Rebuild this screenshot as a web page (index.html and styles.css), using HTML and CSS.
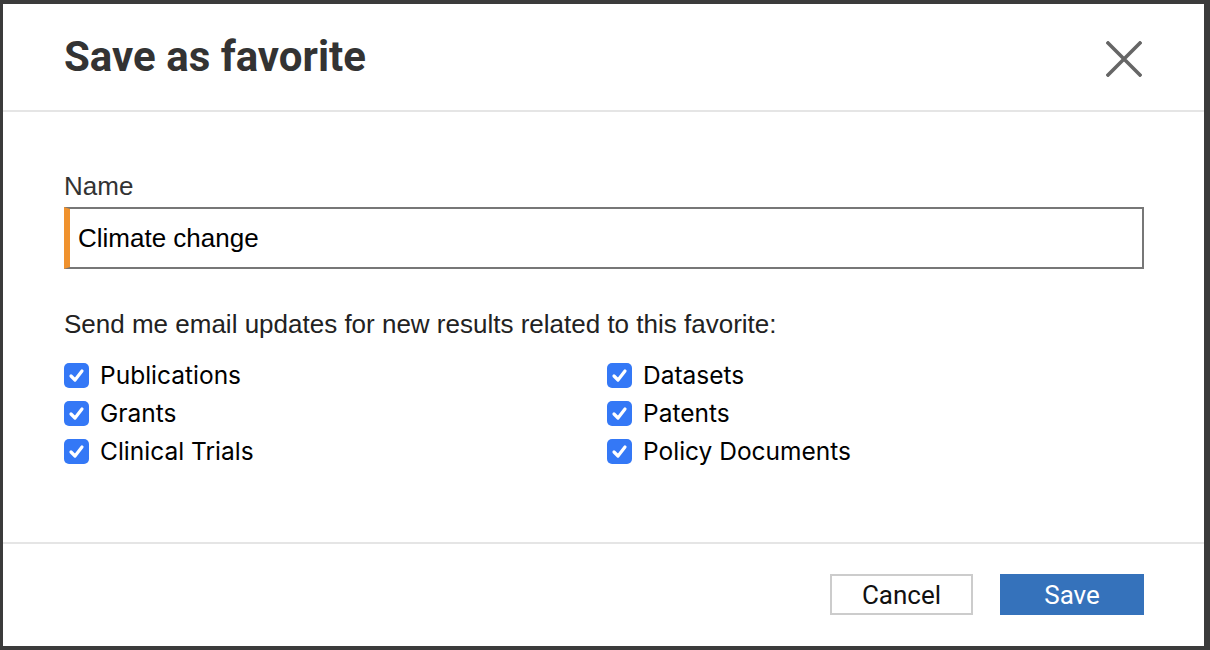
FILE: index.html
```html
<!DOCTYPE html>
<html>
<head>
<meta charset="utf-8">
<link rel="stylesheet" href="styles.css">
</head>
<body>
<div class="modal">
  <div class="header">
    <h1 class="title">Save as favorite</h1>
    <button class="close" aria-label="Close">
      <svg width="36" height="36" viewBox="0 0 36 36"><path d="M2 2 L34 34 M34 2 L2 34" stroke="#666" stroke-width="3.6" stroke-linecap="square" fill="none"/></svg>
    </button>
  </div>
  <div class="content">
    <div class="label">Name</div>
    <div class="input">Climate change</div>
    <div class="prompt">Send me email updates for new results related to this favorite:</div>
    <div class="checks">
      <div class="check"><span class="box"><svg width="17" height="17" viewBox="0 0 17 17"><path d="M3 9 L7 13 L14 4" stroke="#fff" stroke-width="3.2" fill="none" stroke-linecap="round" stroke-linejoin="round"/></svg></span>Publications</div>
      <div class="check"><span class="box"><svg width="17" height="17" viewBox="0 0 17 17"><path d="M3 9 L7 13 L14 4" stroke="#fff" stroke-width="3.2" fill="none" stroke-linecap="round" stroke-linejoin="round"/></svg></span>Datasets</div>
      <div class="check"><span class="box"><svg width="17" height="17" viewBox="0 0 17 17"><path d="M3 9 L7 13 L14 4" stroke="#fff" stroke-width="3.2" fill="none" stroke-linecap="round" stroke-linejoin="round"/></svg></span>Grants</div>
      <div class="check"><span class="box"><svg width="17" height="17" viewBox="0 0 17 17"><path d="M3 9 L7 13 L14 4" stroke="#fff" stroke-width="3.2" fill="none" stroke-linecap="round" stroke-linejoin="round"/></svg></span>Patents</div>
      <div class="check"><span class="box"><svg width="17" height="17" viewBox="0 0 17 17"><path d="M3 9 L7 13 L14 4" stroke="#fff" stroke-width="3.2" fill="none" stroke-linecap="round" stroke-linejoin="round"/></svg></span>Clinical Trials</div>
      <div class="check"><span class="box"><svg width="17" height="17" viewBox="0 0 17 17"><path d="M3 9 L7 13 L14 4" stroke="#fff" stroke-width="3.2" fill="none" stroke-linecap="round" stroke-linejoin="round"/></svg></span>Policy Documents</div>
    </div>
  </div>
  <div class="footer">
    <button class="btn cancel">Cancel</button>
    <button class="btn save">Save</button>
  </div>
</div>
</body>
</html>
```

FILE: styles.css
```css
html, body {
  margin: 0;
  height: 100%;
}
body {
  background: #3b3b3b;
  padding: 4px 6px 4px 3px;
  box-sizing: border-box;
  overflow: hidden;
}
.modal {
  width: 1201px;
  height: 642px;
  background: #fff;
  display: flex;
  flex-direction: column;
}
.header {
  height: 106px;
  padding: 0 62px 0 61px;
  border-bottom: 2px solid #e5e5e5;
  display: flex;
  align-items: center;
  justify-content: space-between;
}
.title {
  margin: 0;
  font-family: Roboto, sans-serif;
  font-weight: 700;
  font-size: 42px;
  color: #333;
  padding-bottom: 2px;
}
.close {
  border: 0;
  background: none;
  padding: 0;
  width: 36px;
  height: 36px;
  display: flex;
  margin-top: 4px;
}
.content {
  flex: 1;
  padding: 60px 60px 0 61px;
  font-family: "Liberation Sans", Arial, sans-serif;
  color: #333;
}
.label {
  font-size: 26px;
  line-height: 28px;
}
.input {
  margin-top: 7px;
  height: 57px;
  border: 2px solid #777;
  border-left: 6px solid #f0922e;
  box-sizing: content-box;
  padding: 1px 0 0 8px;
  font-size: 26px;
  line-height: 57px;
  color: #000;
}
.prompt {
  margin-top: 41px;
  font-size: 26px;
  line-height: 28px;
  color: #222;
}
.checks {
  margin-top: 18px;
  display: grid;
  grid-template-columns: 543px 1fr;
}
.check {
  display: flex;
  align-items: center;
  height: 38px;
  font-family: Inter, "Noto Sans", sans-serif;
  font-size: 24.5px;
  color: #000;
}
.box {
  width: 25px;
  height: 25px;
  border-radius: 5px;
  background: #3478f6;
  display: flex;
  align-items: center;
  justify-content: center;
  margin-right: 11px;
}
.footer {
  height: 104px;
  border-top: 2px solid #e5e5e5;
  display: flex;
  justify-content: flex-end;
  align-items: flex-start;
  padding: 30px 60px 0 0;
  box-sizing: border-box;
  gap: 27px;
}
.btn {
  font-family: Roboto, sans-serif;
  font-size: 26px;
  height: 41px;
  box-sizing: border-box;
  padding: 0;
  cursor: pointer;
}
.cancel {
  width: 143px;
  background: #fff;
  border: 2px solid #ccc;
  color: #111;
}
.save {
  width: 144px;
  background: #3572bb;
  border: 0;
  color: #fff;
}
```
